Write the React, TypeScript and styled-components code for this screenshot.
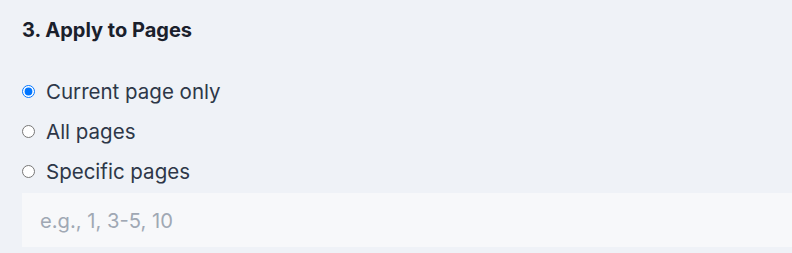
import React from "react";
import styled, { createGlobalStyle } from "styled-components";

const Global = createGlobalStyle`
  html, body { margin: 0; padding: 0; background: #eff2f7; }
  body { font-family: Inter, "Noto Sans", sans-serif; overflow: hidden; }
`;

const Section = styled.section`
  box-sizing: border-box;
  padding: 17px 0 0 22px;
  width: 100%;
`;

const Heading = styled.h3`
  margin: 0;
  font-size: 20px;
  font-weight: 700;
  color: #1a202c;
  line-height: 26px;
`;

const Options = styled.div`
  display: flex;
  flex-direction: column;
  margin-top: 28px;
`;

const Option = styled.label`
  display: flex;
  align-items: center;
  gap: 11px;
  height: 40px;
  font-size: 20.5px;
  font-weight: 400;
  color: #2d3748;
  cursor: pointer;
`;

const Radio = styled.input.attrs({ type: "radio" })`
  margin: 0;
  width: 13px;
  height: 13px;
`;

const PageInput = styled.input`
  box-sizing: border-box;
  display: block;
  width: 100%;
  height: 54px;
  margin-top: 2px;
  border: none;
  outline: none;
  background: #f7f8fa;
  padding: 0 18px;
  font-family: inherit;
  font-size: 20.2px;
  color: #2d3748;
  &::placeholder { color: #a0a8b4; }
`;

export default function App() {
  return (
    <>
      <Global />
      <Section>
        <Heading>3. Apply to Pages</Heading>
        <Options>
          <Option><Radio name="pages" defaultChecked /> Current page only</Option>
          <Option><Radio name="pages" /> All pages</Option>
          <Option><Radio name="pages" /> Specific pages</Option>
        </Options>
        <PageInput placeholder="e.g., 1, 3-5, 10" />
      </Section>
    </>
  );
}
